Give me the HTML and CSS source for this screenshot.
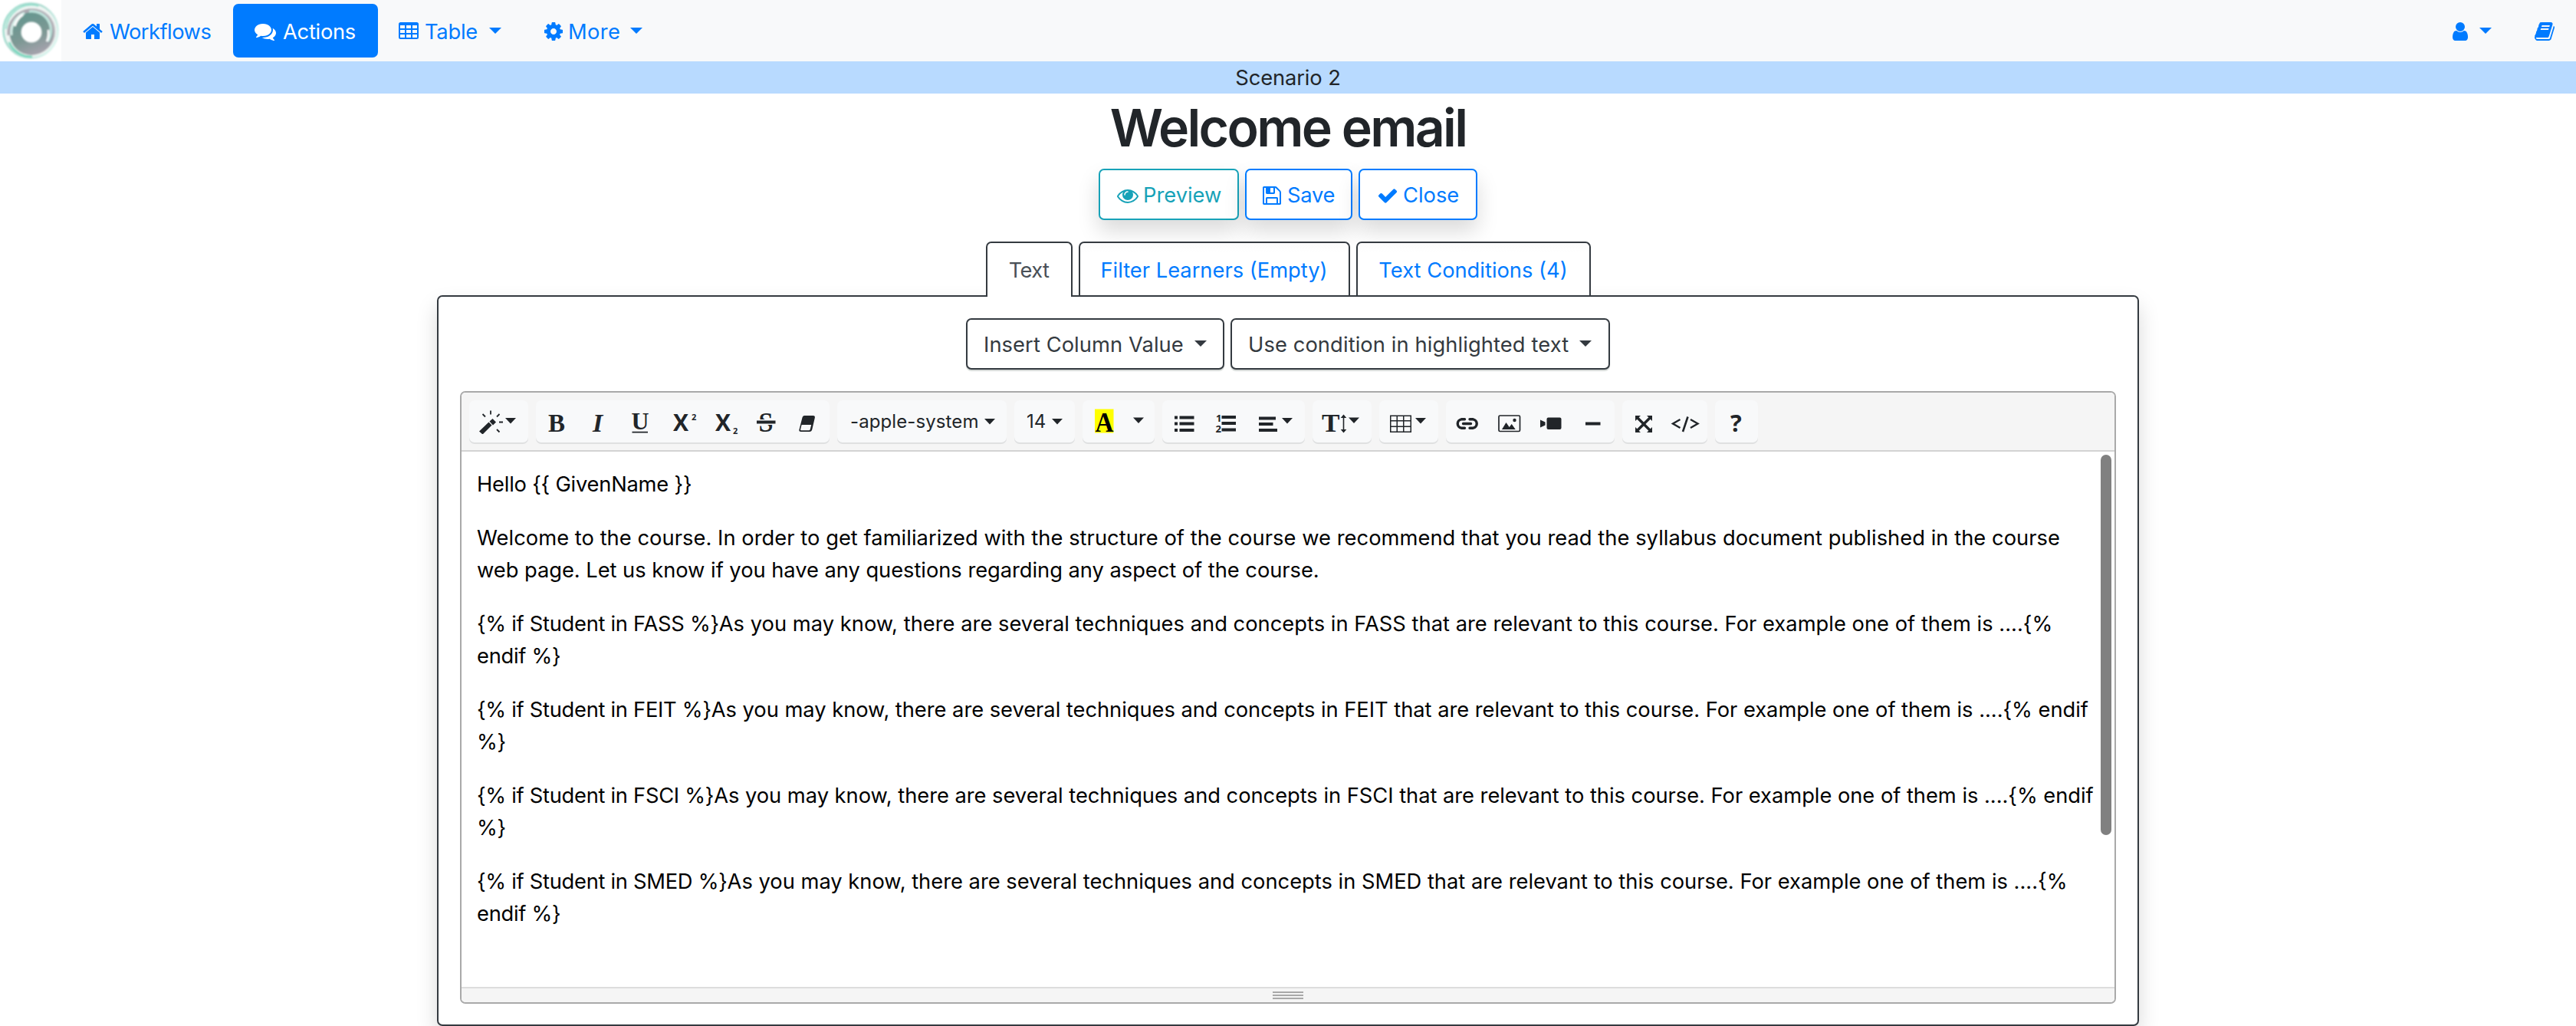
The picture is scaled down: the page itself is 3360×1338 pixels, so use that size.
FILE: index.html
```html
<!DOCTYPE html>
<html lang="en">
<head>
<meta charset="utf-8">
<title>Welcome email</title>
<link rel="stylesheet" href="styles.css">
</head>
<body>
<nav class="navbar">
  <a class="brand" href="#">
    <svg width="80" height="80" viewBox="0 0 80 80">
      <defs>
        <linearGradient id="disc" x1="0.2" y1="0" x2="0.6" y2="1"><stop offset="0" stop-color="#62978f"/><stop offset="0.6" stop-color="#7d9894"/><stop offset="1" stop-color="#a7a3ae"/></linearGradient>
        <linearGradient id="rim" x1="0" y1="0" x2="1" y2="0.6"><stop offset="0" stop-color="#8fdcca"/><stop offset="0.5" stop-color="#a5d8cc"/><stop offset="1" stop-color="#d5f3ec"/></linearGradient>
        <filter id="soft"><feGaussianBlur stdDeviation="0.8"/></filter>
      </defs>
      <rect width="80" height="80" fill="#fff"/>
      <g fill="none" filter="url(#soft)">
        <circle cx="40" cy="40" r="35.500" fill="#eef5f3" stroke="url(#rim)" stroke-width="2.500"/>
        <circle cx="42" cy="41" r="30" fill="#b4b1b8"/>
        <circle cx="41" cy="44" r="28" fill="url(#disc)"/>
        <path d="M8 38A33 33 0 0 1 50 8" stroke="#7fdcc5" stroke-width="1.500"/>
        <path d="M12 55A31 31 0 0 0 42 74" stroke="#63d4b7" stroke-width="2.500"/>
        <path d="M11 46A30 30 0 0 1 40 13" stroke="#a9a7ae" stroke-width="3"/>
        <path d="M15 46A27 27 0 0 1 32 17" stroke="#d5efe9" stroke-width="3"/>
        <path d="M19 34Q22 24 30 19" stroke="#fff" stroke-width="3"/>
        <path d="M38 15A25 25 0 0 1 62 54" stroke="#bfe6de" stroke-width="3"/>
        <path d="M63 39Q64 48 61 54" stroke="#fff" stroke-width="2.500"/>
      </g>
      <circle cx="41" cy="42" r="13.500" fill="#fff" filter="url(#soft)"/>
    </svg>
  </a>
  <a class="nav-link workflows" href="#"><svg class="fa" width="26" height="28" viewBox="64 0 1664 1792"><path d="M1472 992v480q0 26-19 45t-45 19h-384v-384h-256v384h-384q-26 0-45-19t-19-45v-480q0-1 .5-3t.5-3l575-474 575 474q1 2 1 6zm223-69l-62 74q-8 9-21 11h-3q-13 0-21-7l-692-577-692 577q-12 8-24 7-13-2-21-11l-62-74q-8-10-7-23.500t11-21.500l719-599q32-26 76-26t76 26l244 204v-195q0-14 9-23t23-9h192q14 0 23 9t9 23v408l219 182q10 8 11 21.500t-7 23.500z"/></svg><span>Workflows</span></a>
  <a class="nav-link actions active" href="#"><svg class="fa" width="28" height="28" viewBox="0 0 1792 1792"><path d="M1408 768q0 139-94 257t-256.500 186.500-353.500 68.500q-86 0-176-16-124 88-278 128-36 9-86 16h-3q-11 0-20.500-8t-11.500-21q-1-3-1-6.500t.5-6.500 2-6l2.500-5 3.500-5.500 4-5 4.500-5 4-4.500q5-6 23-25t26-29.500 22.500-29 25-38.500 20.500-44q-124-72-195-177t-71-224q0-139 94-257t256.500-186.500 353.500-68.500 353.500 68.500 256.500 186.500 94 257zm384 256q0 120-71 224.500t-195 176.500q10 24 20.500 44t25 38.500 22.500 29 26 29.500 23 25q1 1 4 4.500t4.500 5 4 5 3.500 5.500l2.500 5 2 6 .5 6.500-1 6.500q-3 14-13 22t-22 7q-50-7-86-16-154-40-278-128-90 16-176 16-271 0-472-132 58 4 88 4 161 0 309-45t264-129q125-92 192-212t67-254q0-77-23-152 129 71 204 178t75 230z"/></svg><span>Actions</span></a>
  <a class="nav-link table" href="#"><svg class="fa" width="26" height="28" viewBox="0 0 26 28"><path fill-rule="evenodd" d="M2.500 2h21A2.500 2.500 0 0 1 26 4.500v17a2.500 2.500 0 0 1-2.500 2.500h-21A2.500 2.500 0 0 1 0 21.500v-17A2.500 2.500 0 0 1 2.500 2zM2 6v4h6V6zM10 6v4h6V6zM18 6v4h6V6zM2 12v4h6v-4zM10 12v4h6v-4zM18 12v4h6v-4zM2 18v4h6v-4zM10 18v4h6v-4zM18 18v4h6v-4z"/></svg><span>Table</span><i class="caret"></i></a>
  <a class="nav-link more" href="#"><svg class="fa" width="24" height="28" viewBox="128 0 1536 1792"><path d="M1152 896q0-106-75-181t-181-75-181 75-75 181 75 181 181 75 181-75 75-181zm512-109v222q0 12-8 23t-20 13l-185 28q-19 54-39 91 35 50 107 138 10 12 10 25t-9 23q-27 37-99 108t-94 71q-12 0-26-9l-138-108q-44 23-91 38-16 136-29 186-7 28-36 28h-222q-14 0-24.500-8.500t-11.500-21.500l-28-184q-49-16-90-37l-141 107q-10 9-25 9-14 0-25-11-126-114-165-168-7-10-7-23 0-12 8-23 15-21 51-66.500t54-70.500q-27-50-41-99l-183-27q-13-2-21-12.500t-8-23.500v-222q0-12 8-23t19-13l186-28q14-46 39-92-40-57-107-138-10-12-10-24 0-10 9-23 26-36 98.500-107.500t94.500-71.500q13 0 26 10l138 107q44-23 91-38 16-136 29-186 7-28 36-28h222q14 0 24.500 8.500t11.500 21.500l28 184q49 16 90 37l142-107q9-9 24-9 13 0 25 10 129 119 165 170 7 8 7 22 0 12-8 23-15 21-51 66.500t-54 70.500q26 50 41 98l183 28q13 2 21 12.500t8 23.500z"/></svg><span>More</span><i class="caret"></i></a>
  <div class="nav-right">
    <a class="nav-link user" href="#"><svg class="fa" width="20" height="28" viewBox="256 0 1280 1792"><path d="M1536 1399q0 109-62.500 187t-150.500 78h-854q-88 0-150.500-78t-62.500-187q0-85 8.500-160.500t31.500-152 58.500-131 94-89 134.500-34.500q131 128 313 128t313-128q76 0 134.500 34.500t94 89 58.500 131 31.500 152 8.500 160.500zm-256-887q0 159-112.500 271.500t-271.500 112.500-271.500-112.500-112.500-271.500 112.500-271.500 271.500-112.500 271.500 112.500 112.500 271.500z"/></svg><i class="caret"></i></a>
    <a class="nav-link docs" href="#"><svg class="fa" width="26" height="28" viewBox="64 0 1664 1792"><path d="M1703 478q40 57 18 129l-275 906q-19 64-76.500 107.500t-122.500 43.500h-923q-77 0-148.500-53.500t-99.500-131.500q-24-67-2-127 0-4 3-27t4-37q1-8-3-21.500t-3-19.500q2-11 8-21t16.500-23.500 16.500-23.500q23-38 45-91.500t30-91.500q3-10 .5-30t-.5-28q3-11 17-28t17-23q21-36 42-92t25-90q1-9-2.500-32t.5-28q4-13 22-30.500t22-22.500q19-26 42.500-84.500t27.500-96.500q1-8-3-25.500t-2-26.500q2-8 9-18t18-23 17-21q8-12 16.500-30.500t15-35 16-36 19.500-32 26.500-23.500 36-11.500 47.500 5.500l-1 3q38-9 51-9h761q74 0 114 56t18 130l-274 906q-36 119-71.500 153.500t-128.500 34.500h-869q-27 0-38 15-11 16-1 43 24 70 144 70h923q29 0 56-15.500t35-41.500l300-987q7-22 5-57 38 15 59 43zm-1064 2q-4 13 2 22.500t20 9.500h608q13 0 25.500-9.500t16.500-22.500l21-64q4-13-2-22.500t-20-9.500h-608q-13 0-25.500 9.500t-16.500 22.500zm-83 256q-4 13 2 22.500t20 9.500h608q13 0 25.500-9.500t16.500-22.500l21-64q4-13-2-22.500t-20-9.500h-608q-13 0-25.500 9.500t-16.500 22.500z"/></svg></a>
  </div>
</nav>
<div class="workflow-name">Scenario 2</div>
<h1 class="title">Welcome email</h1>
<div class="action-buttons">
  <button class="btn btn-info preview"><svg class="fa" width="28" height="28" viewBox="0 0 1792 1792"><path d="M1664 960q-152-236-381-353 61 104 61 225 0 185-131.500 316.500t-316.500 131.500-316.500-131.500-131.500-316.500q0-121 61-225-229 117-381 353 133 205 333.500 326.500t434.500 121.500 434.500-121.500 333.500-326.500zm-720-384q0-20-14-34t-34-14q-125 0-214.500 89.500t-89.500 214.500q0 20 14 34t34 14 34-14 14-34q0-86 61-147t147-61q20 0 34-14t14-34zm848 384q0 34-20 69-140 230-376.500 368.500t-499.500 138.500-499.500-139-376.500-368q-20-35-20-69t20-69q140-229 376.500-368t499.500-139 499.500 139 376.500 368q20 35 20 69z"/></svg><span>Preview</span></button>
  <button class="btn btn-primary save"><svg class="fa" width="24" height="28" viewBox="128 0 1536 1792"><path d="M512 1536h768v-384h-768v384zm896 0h128v-896q0-14-10-38.500t-20-34.500l-281-281q-10-10-34-20t-39-10v416q0 40-28 68t-68 28h-576q-40 0-68-28t-28-68v-416h-128v1280h128v-416q0-40 28-68t68-28h832q40 0 68 28t28 68v416zm-384-928v-320q0-13-9.500-22.500t-22.500-9.500h-192q-13 0-22.500 9.500t-9.500 22.500v320q0 13 9.500 22.500t22.500 9.500h192q13 0 22.500-9.500t9.500-22.500zm640 32v928q0 40-28 68t-68 28h-1344q-40 0-68-28t-28-68v-1344q0-40 28-68t68-28h928q40 0 88 20t76 48l280 280q28 28 48 76t20 88z"/></svg><span>Save</span></button>
  <button class="btn btn-primary close"><svg class="fa" width="28" height="28" viewBox="0 0 1792 1792"><path d="M1671 566q0 40-28 68l-724 724-136 136q-28 28-68 28t-68-28l-136-136-362-362q-28-28-28-68t28-68l136-136q28-28 68-28t68 28l294 295 656-657q28-28 68-28t68 28l136 136q28 28 28 68z"/></svg><span>Close</span></button>
</div>
<div class="tabs">
  <a class="tab tab-text active" href="#"><span>Text</span></a>
  <a class="tab tab-filter" href="#"><span>Filter Learners (Empty)</span></a>
  <a class="tab tab-conditions" href="#"><span>Text Conditions (4)</span></a>
</div>
<main class="panel">
  <div class="inserts">
    <button class="btn btn-dark column"><span>Insert Column Value</span><i class="caret"></i></button>
    <button class="btn btn-dark condition"><span>Use condition in highlighted text</span><i class="caret"></i></button>
  </div>
  <section class="editor">
    <div class="toolbar">
      <div class="group g-style">
        <svg width="77" height="32" viewBox="0 0 77 32"><path d="M13 28.500L25.500 16.500l4 4L17.500 32.500zM26.500 15.500l4-3.500 4.500 4.500-4 4z"/><path d="M28 1.500v5M17.500 6l3.500 3.500M39.500 6L36 9.500M39 16.500h5M36 26l3.500 3.500" fill="none" stroke="currentColor" stroke-width="1.800"/><path d="M47 11h14l-7 7.500z"/></svg>
      </div>
      <div class="group g-font">
        <svg width="54.500" height="55" viewBox="0 -11.500 54.500 55"><text class="serif" x="16" y="29" font-size="34" textLength="22" lengthAdjust="spacingAndGlyphs">B</text></svg>
        <svg width="54.500" height="55" viewBox="0 -11.500 54.500 55"><text class="serif italic" x="19" y="29" font-size="34">I</text></svg>
        <svg width="54.500" height="55" viewBox="0 -11.500 54.500 55"><text class="serif" x="15.500" y="26" font-size="31" textLength="23" lengthAdjust="spacingAndGlyphs">U</text><path d="M16.500 29.200h20.500v1.800H16.500z"/></svg>
        <svg width="54.500" height="55" viewBox="0 -11.500 54.500 55"><text class="sans" x="15" y="28.500" font-size="30">X</text><text class="sans" x="39" y="14" font-size="11">2</text></svg>
        <svg width="54.500" height="55" viewBox="0 -11.500 54.500 55"><text class="sans" x="16" y="28.500" font-size="30">X</text><text class="sans" x="39" y="32" font-size="11">2</text></svg>
        <svg width="54.500" height="55" viewBox="0 -11.500 54.500 55"><text class="serif" x="17.500" y="29.500" font-size="36" textLength="19" lengthAdjust="spacingAndGlyphs">S</text><path fill="#f8f9fa" d="M14 13.500h27v7H14z"/><path d="M15 15h24.500v4H15z"/></svg>
        <svg width="54.500" height="32" viewBox="0 0 54.500 32"><path fill-rule="evenodd" d="M23 8h11.500q3 0 2.300 3l-3.500 15q-.7 3-3.500 3H19q-3.500 0-2.500-3l4-15.500Q21 8 23 8zM19.600 20l-1.500 6q-.3 1.200 1 1.200h10q1.200 0 1.600-1.200l1.500-6z"/></svg>
      </div>
      <div class="group g-name"><span>-apple-system</span><svg width="14" height="8" viewBox="0 0 14 8"><path d="M0 0h14L7 7.500z"/></svg></div>
      <div class="group g-size"><span>14</span><svg width="14" height="8" viewBox="0 0 14 8"><path d="M0 0h14L7 7.500z"/></svg></div>
      <div class="group g-color">
        <svg width="94" height="55" viewBox="0 -11.500 94 55"><path fill="#ff0" d="M16 0h24.500v31H16z"/><text class="serif black" x="16.500" y="29.500" font-size="36" textLength="24" lengthAdjust="spacingAndGlyphs">A</text><path d="M66 11h14l-7 7.500z"/></svg>
      </div>
      <div class="group g-para">
        <svg width="55" height="32" viewBox="0 0 55 32"><path d="M16 8.500h4v4h-4zM22.500 8.500h19v4h-19zM16 16.500h4v4h-4zM22.500 16.500h19v4h-19zM16 25h4v4h-4zM22.500 25h19v4h-19z"/></svg>
        <svg width="55" height="55" viewBox="0 -11.500 55 55"><path d="M22.500 8.500H41v4H22.500zM22.500 16.500H41v4H22.500zM22.500 25H41v4H22.500z"/><text class="sans" x="15" y="16.500" font-size="13">1</text><text class="sans" x="14.500" y="30" font-size="13">2</text></svg>
        <svg width="76" height="32" viewBox="0 0 76 32"><path d="M16 9.500h22v4H16zM16 17h18.500v4H16zM16 25h24v4H16zM46 11h14l-7 7.500z"/></svg>
      </div>
      <div class="group g-height">
        <svg width="77" height="55" viewBox="0 -11.500 77 55"><text class="serif" x="12" y="29.500" font-size="33" textLength="23.500" lengthAdjust="spacingAndGlyphs">T</text><path d="M40.500 7l3.800 4.500h-3v15h3L40.500 31l-3.800-4.500h3v-15h-3zM47 11h14l-7 7.500z"/></svg>
      </div>
      <div class="group g-table">
        <svg width="77" height="32" viewBox="0 0 77 32"><path fill-rule="evenodd" d="M14 7.500h28v22.500H14zM15.500 9v5h7V9zM24 9v5h7V9zM32.500 9v5h8V9zM15.500 15.500v6h7v-6zM24 15.500v6h7v-6zM32.500 15.500v6h8v-6zM15.500 23v5.500h7V23zM24 23v5.500h7V23zM32.500 23v5.500h8V23zM47 11h14l-7 7.500z"/></svg>
      </div>
      <div class="group g-insert">
        <svg width="55" height="32" viewBox="0 0 55 32"><path d="M24.500 12.800H20a5.800 5.800 0 0 0 0 11.400h4.500M31 12.800h4.500a5.800 5.800 0 0 1 0 11.400H31M22.500 18.500h10" fill="none" stroke="currentColor" stroke-width="3.400" stroke-linecap="round"/></svg>
        <svg width="55" height="32" viewBox="0 0 55 32"><rect x="14" y="8" width="27.500" height="20.500" rx="1.500" fill="none" stroke="currentColor" stroke-width="1.700"/><path d="M18 26l5.500-9 4.200 6 3-4 5 7z"/><circle cx="34.500" cy="14" r="2.200"/></svg>
        <svg width="55" height="32" viewBox="0 0 55 32"><rect x="21.500" y="10.500" width="19" height="15.500" rx="2"/><path d="M13 13.500l6.500 3v4l-6.500 3z"/></svg>
        <svg width="55" height="32" viewBox="0 0 55 32"><path d="M17 16.500h19.500v4H17z"/></svg>
      </div>
      <div class="group g-view">
        <svg width="55" height="32" viewBox="0 0 55 32"><path d="M17 8h7l-2.300 2.300 6.300 6.300 6.300-6.300L32 8h7v7l-2.300-2.300-6.300 6.300 6.300 6.300L39 23v7h-7l2.300-2.300-6.300-6.300-6.300 6.300L24 30h-7v-7l2.300 2.300 6.300-6.300-6.300-6.300L17 15z"/></svg>
        <svg width="56" height="32" viewBox="0 0 56 32"><path d="M20.500 13l-9.500 5.500 9.500 5.500M34 13l9.500 5.500-9.500 5.500" fill="none" stroke="currentColor" stroke-width="2.400"/><path d="M30.500 9.500L24 29" fill="none" stroke="currentColor" stroke-width="2.600"/></svg>
      </div>
      <div class="group g-help">
        <svg width="56" height="55" viewBox="0 -11.500 56 55"><text class="sans" x="20" y="29.500" font-size="31">?</text></svg>
      </div>
    </div>
    <div class="content">
      <p><span class="l0">Hello {{ GivenName }}</span></p>
      <p><span class="l1">Welcome to the course. In order to get familiarized with the structure of the course we recommend that you read the syllabus document published in the course</span><br><span class="l2">web page. Let us know if you have any questions regarding any aspect of the course.</span></p>
      <p><span class="tag">{% if Student in FASS %}</span><span class="l5">As you may know, there are several techniques and concepts in FASS that are relevant to this course. For example one of them is ....{%</span><br><span class="tag">endif %}</span></p>
      <p><span class="tag">{% if Student in FEIT %}</span><span class="l3">As you may know, there are several techniques and concepts in FEIT that are relevant to this course. For example one of them is ....{% endif</span><br><span class="tag">%}</span></p>
      <p><span class="tag">{% if Student in FSCI %}</span><span class="l3">As you may know, there are several techniques and concepts in FSCI that are relevant to this course. For example one of them is ....{% endif</span><br><span class="tag">%}</span></p>
      <p><span class="tag">{% if Student in SMED %}</span><span>As you may know, there are several techniques and concepts in SMED that are relevant to this course. For example one of them is ....{%</span><br><span class="tag">endif %}</span></p>
      <div class="scrollbar"></div>
    </div>
    <div class="statusbar"><i></i><i></i><i></i></div>
  </section>
</main>
</body>
</html>
```
FILE: styles.css
```css
* { box-sizing: border-box; }
html, body { height: 1338px; overflow: hidden; }
body {
  margin: 0;
  background: #fff;
  color: #212529;
  font: 27.3px/42px Inter, "Liberation Sans", sans-serif;
  white-space: nowrap;
}
a { color: #007bff; text-decoration: none; }
svg { display: block; flex: none; fill: currentColor; }
span { flex: none; }

.caret {
  flex: none;
  border: solid transparent;
  border-width: 8px 8px 0;
  border-top-color: currentColor;
}

.navbar { display: flex; align-items: center; height: 80px; background: #f8f9fa; }
.brand { width: 80px; height: 80px; }
.nav-link { display: flex; align-items: center; height: 70px; padding-left: 28px; border-radius: 7px; }
.nav-link .fa { margin-top: 2px; }
.nav-link span, .btn span { padding-top: 3px; }
.nav-link .caret { margin-left: 15px; }
.nav-link.active { background: #007bff; color: #fff; }
.workflows { width: 224px; letter-spacing: -0.51px; }
.workflows .fa { margin-right: 9px; }
.actions { width: 189px; letter-spacing: -0.27px; }
.actions .fa { margin-right: 9px; }
.table { width: 189px; letter-spacing: -0.25px; }
.table .fa { margin-right: 8px; margin-left: -1px; }
.more { letter-spacing: 0.4px; }
.more .fa { margin-right: 7px; }
.more .caret { margin-left: 13px; }
.nav-right { display: flex; margin-left: auto; padding-right: 28px; }
.nav-right .nav-link { padding: 0; }
.docs { margin-left: 56px; }

.workflow-name { height: 42px; padding-top: 1px; background: #b8daff; text-align: center; letter-spacing: -0.1px; }
.title {
  margin: 2px 0 12px;
  font-size: 68px;
  line-height: 84px;
  font-weight: 560;
  letter-spacing: -2.7px;
  text-align: center;
}

.action-buttons, .tabs, .inserts { display: flex; justify-content: center; gap: 8px; }
.btn {
  display: flex;
  align-items: center;
  height: 67px;
  padding: 0 0 0 22px;
  border: 2px solid currentColor;
  border-radius: 7px;
  background: #fff;
  font: inherit;
}
.action-buttons .btn { box-shadow: 0 14px 28px rgba(0, 0, 0, 0.15); }
.btn-info { color: #17a2b8; }
.btn-primary { color: #007bff; }
.btn-dark { color: #343a40; box-shadow: 0 2px 1px rgba(40, 60, 50, 0.2); }
.btn .fa { margin-top: 2px; }
.preview { width: 183px; }
.preview .fa { margin-right: 6px; }
.save { width: 140px; letter-spacing: -0.25px; }
.save .fa { margin: 3px 8px 0 -1px; }
.close { width: 155px; }
.close .fa { margin-right: 6px; }

.tabs { position: relative; margin-top: 28px; }
.tab {
  height: 70px;
  padding-top: 15px;
  border: 2px solid #343a40;
  border-bottom: 0;
  border-radius: 7px 7px 0 0;
  background: linear-gradient(#fbfbfb, #fff 12px);
  text-align: center;
}
.tab.active { height: 72px; margin-bottom: -2px; background: #fff; color: #495057; }
.tab-text { width: 113px; letter-spacing: -0.67px; }
.tab-filter { width: 354px; }
.tab-conditions { width: 306px; }

.panel {
  width: 2220px;
  height: 953px;
  margin: 0 auto;
  padding: 28px;
  border: 2px solid #343a40;
  border-radius: 7px;
  box-shadow: 0 14px 28px rgba(0, 0, 0, 0.15);
}
.column { width: 337px; padding-left: 21px; letter-spacing: 0.08px; }
.condition { width: 495px; padding-left: 21px; letter-spacing: 0.1px; }
.inserts .caret { margin: 0 0 2px 14px; }

.editor {
  display: flex;
  flex-direction: column;
  height: 799px;
  margin-top: 28px;
  border: 2px solid #a9a9a9;
  border-radius: 7px;
  overflow: hidden;
}
.toolbar {
  display: flex;
  align-items: center;
  gap: 10px;
  height: 77px;
  padding: 0 10px;
  border-bottom: 2px solid #d3d3d3;
  background: #f5f5f5;
}
.group {
  display: flex;
  align-items: center;
  height: 55px;
  border-radius: 7px;
  background: #f8f9fa;
  box-shadow: 0 2px 0 #dfe0e1;
  font-size: 24px;
}
.g-style { width: 77px; }
.g-font { width: 383px; }
.g-name { width: 221px; padding-left: 17px; letter-spacing: 0.1px; }
.g-name svg { margin-left: 7px; }
.g-size { width: 79px; padding-left: 16px; }
.g-size svg { margin-left: 8px; }
.g-color { width: 94px; }
.g-para { width: 186px; }
.g-height { width: 77px; }
.g-table { width: 77px; }
.g-insert { width: 220px; }
.g-view { width: 111px; }
.g-help { width: 56px; }
.group text { letter-spacing: 0; }
.serif { font-family: "Liberation Serif", serif; font-weight: 700; }
.italic { font-style: italic; }
.sans { font-family: "Open Sans", sans-serif; font-weight: 700; }
.black { fill: #000; }

.content { position: relative; flex: 1; padding: 21.5px 20px 0; color: #000; }
.content p { margin: 0 0 28px; }
.tag { letter-spacing: -0.28px; }
.l0 { letter-spacing: -0.22px; }
.l1 { letter-spacing: 0.04px; }
.l2 { letter-spacing: -0.035px; }
.l3 { letter-spacing: -0.03px; }
.l5 { letter-spacing: 0.018px; }
.scrollbar {
  position: absolute;
  top: 4px;
  right: 4px;
  width: 14px;
  height: 496px;
  border-radius: 7px;
  background: #808080;
}
.statusbar {
  display: flex;
  flex-direction: column;
  align-items: center;
  gap: 2px;
  height: 20px;
  padding-top: 4px;
  border-top: 2px solid #ddd;
  background: #f5f5f5;
}
.statusbar i { width: 40px; height: 2px; background: #a9a9a9; }
```
